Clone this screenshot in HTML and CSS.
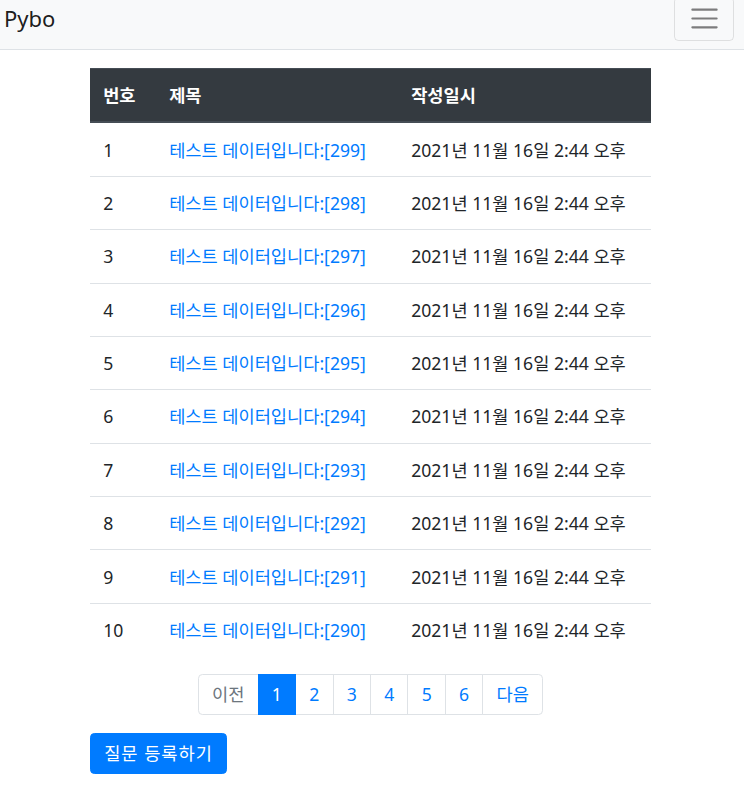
FILE: index.html
```html
<!DOCTYPE html>
<html lang="ko">
<head>
<meta charset="utf-8">
<title>Pybo</title>
<link rel="stylesheet" href="styles.css">
</head>
<body>
<nav class="navbar">
  <a class="brand" href="#">Pybo</a>
  <button class="toggler" type="button" aria-label="Toggle navigation">
    <svg class="toggler-icon" viewBox="0 0 30 30" width="33" height="33"><path d="M4 7h22M4 15h22M4 23h22" stroke="rgba(0,0,0,0.5)" stroke-width="2" stroke-linecap="round"/></svg>
  </button>
</nav>
<main class="container">
  <table class="table">
    <thead>
      <tr><th class="col-no">번호</th><th class="col-title">제목</th><th>작성일시</th></tr>
    </thead>
    <tbody>
      <tr><td>1</td><td><a href="#">테스트 데이터입니다:[299]</a></td><td>2021년 11월 16일 2:44 오후</td></tr>
      <tr><td>2</td><td><a href="#">테스트 데이터입니다:[298]</a></td><td>2021년 11월 16일 2:44 오후</td></tr>
      <tr><td>3</td><td><a href="#">테스트 데이터입니다:[297]</a></td><td>2021년 11월 16일 2:44 오후</td></tr>
      <tr><td>4</td><td><a href="#">테스트 데이터입니다:[296]</a></td><td>2021년 11월 16일 2:44 오후</td></tr>
      <tr><td>5</td><td><a href="#">테스트 데이터입니다:[295]</a></td><td>2021년 11월 16일 2:44 오후</td></tr>
      <tr><td>6</td><td><a href="#">테스트 데이터입니다:[294]</a></td><td>2021년 11월 16일 2:44 오후</td></tr>
      <tr><td>7</td><td><a href="#">테스트 데이터입니다:[293]</a></td><td>2021년 11월 16일 2:44 오후</td></tr>
      <tr><td>8</td><td><a href="#">테스트 데이터입니다:[292]</a></td><td>2021년 11월 16일 2:44 오후</td></tr>
      <tr><td>9</td><td><a href="#">테스트 데이터입니다:[291]</a></td><td>2021년 11월 16일 2:44 오후</td></tr>
      <tr><td>10</td><td><a href="#">테스트 데이터입니다:[290]</a></td><td>2021년 11월 16일 2:44 오후</td></tr>
    </tbody>
  </table>
  <ul class="pagination">
    <li class="page-item disabled"><span class="page-link">이전</span></li>
    <li class="page-item active"><span class="page-link">1</span></li>
    <li class="page-item"><a class="page-link" href="#">2</a></li>
    <li class="page-item"><a class="page-link" href="#">3</a></li>
    <li class="page-item"><a class="page-link" href="#">4</a></li>
    <li class="page-item"><a class="page-link" href="#">5</a></li>
    <li class="page-item"><a class="page-link" href="#">6</a></li>
    <li class="page-item"><a class="page-link" href="#">다음</a></li>
  </ul>
  <a class="btn-primary" href="#">질문 등록하기</a>
</main>
</body>
</html>
```
FILE: styles.css
```css
html, body {
  margin: 0;
  padding: 0;
  background: #fff;
}
body {
  font-family: "Noto Sans", "Noto Sans CJK KR", sans-serif;
  font-size: 17.6px;
  line-height: 26px;
  color: #212529;
  overflow: hidden;
}
a { color: #007bff; text-decoration: none; }

.navbar {
  margin-top: -12px;
  display: flex;
  align-items: center;
  justify-content: space-between;
  padding: 8.5px 10px 8.5px 4px;
  background: #f8f9fa;
  border-bottom: 1px solid #dee2e6;
}
.brand {
  font-size: 22px;
  line-height: 33px;
  padding: 5.5px 0;
  color: rgba(0,0,0,0.9);
}
.toggler {
  width: 60px;
  height: 44px;
  padding: 0;
  display: flex;
  align-items: center;
  justify-content: center;
  background: transparent;
  border: 1px solid rgba(0,0,0,0.1);
  border-radius: 4.4px;
}
.toggler-icon { display: block; }

.container {
  width: 561px;
  margin: 18px 0 0 90px;
}
.table {
  width: 100%;
  border-collapse: collapse;
  margin-bottom: 17.6px;
}
.table th, .table td {
  padding: 13.2px;
  text-align: left;
  vertical-align: top;
  border-top: 1px solid #dee2e6;
}
.table thead th {
  background: #343a40;
  color: #fff;
  font-weight: 700;
  border-top: 1px solid #454d55;
  border-bottom: 2px solid #454d55;
}
.table .col-no { width: 39.6px; }
.table .col-title { width: 215.6px; }
.table td { white-space: nowrap; }

.pagination {
  list-style: none;
  margin: 0 0 17.6px;
  padding: 0;
  display: flex;
  justify-content: center;
}
.page-link {
  display: block;
  padding: 7.7px 13.2px;
  line-height: 24.2px;
  border: 1px solid #dee2e6;
  margin-left: -1px;
  color: #007bff;
  background: #fff;
}
.page-item:first-child .page-link {
  margin-left: 0;
  border-radius: 4.4px 0 0 4.4px;
}
.page-item:last-child .page-link {
  border-radius: 0 4.4px 4.4px 0;
}
.page-item.disabled .page-link { color: #6c757d; }
.page-item.active .page-link {
  background: #007bff;
  border-color: #007bff;
  color: #fff;
  position: relative;
}

.btn-primary {
  display: inline-block;
  padding: 6.6px 13.2px;
  line-height: 26.4px;
  letter-spacing: 1px;
  border: 1px solid #007bff;
  border-radius: 4.4px;
  background: #007bff;
  color: #fff;
}
```
